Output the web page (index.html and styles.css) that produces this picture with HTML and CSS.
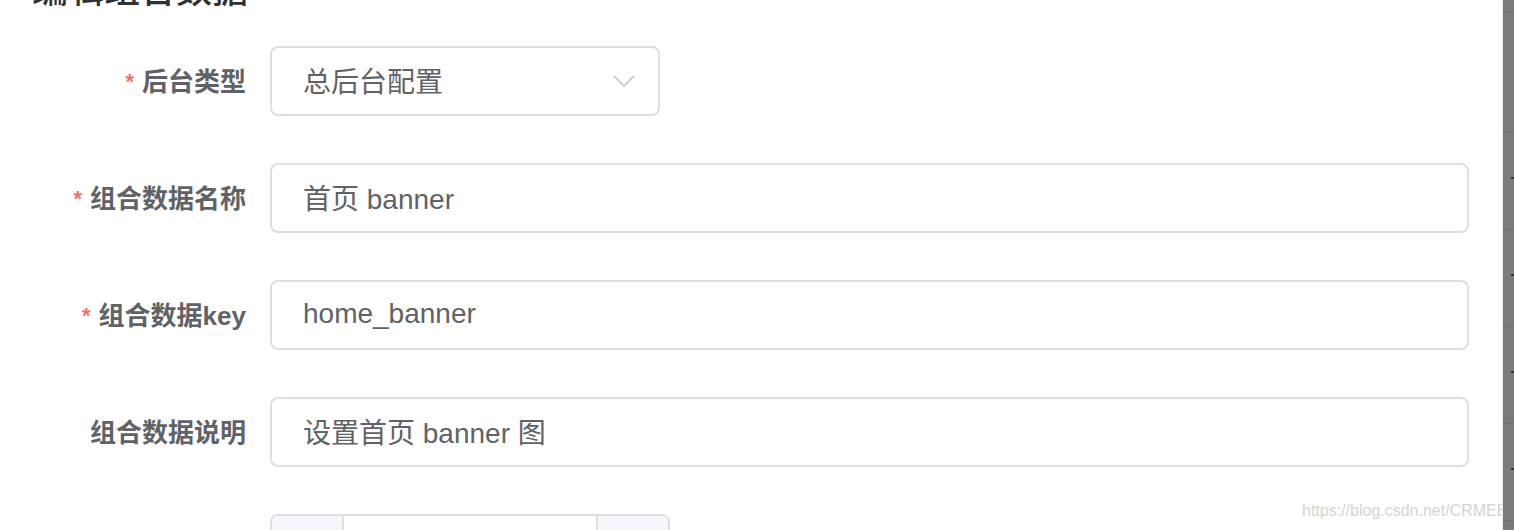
FILE: index.html
```html
<!DOCTYPE html>
<html>
  <head>
    <title>编辑组合数据</title>
    <link rel="stylesheet" href="styles.css">
  </head>
  <body>
    <div class="page">
      <div class="dialog">
        <h3 class="dialog-title">编辑组合数据</h3>
        <div class="form">
          <div class="form-item">
            <label class="form-label"><span class="req">*</span>后台类型</label>
            <div class="select">
              <span>总后台配置</span>
              <svg class="arrow" width="22" height="12" viewBox="0 0 22 12"><path d="M1 1 L11 11 L21 1" fill="none" stroke="#c0c4cc" stroke-width="1.6"/></svg>
            </div>
          </div>
          <div class="form-item">
            <label class="form-label"><span class="req">*</span>组合数据名称</label>
            <div class="input">首页 banner</div>
          </div>
          <div class="form-item">
            <label class="form-label"><span class="req">*</span>组合数据key</label>
            <div class="input">home_banner</div>
          </div>
          <div class="form-item">
            <label class="form-label">组合数据说明</label>
            <div class="input">设置首页 banner 图</div>
          </div>
          <div class="form-item">
            <label class="form-label"></label>
            <div class="number">
              <span class="num-btn"></span>
              <span class="num-value"></span>
              <span class="num-btn right"></span>
            </div>
          </div>
        </div>
        <div class="watermark">https://blog.csdn.net/CRMEB</div>
      </div>
      <div class="mask">
        <div class="mask-row first"></div>
        <div class="mask-row tall"></div>
        <div class="mask-row"></div>
        <div class="mask-row"></div>
        <div class="mask-row"></div>
        <div class="mask-row"></div>
        <div class="mask-row"></div>
      </div>
    </div>
  </body>
</html>
```

FILE: styles.css
```css
body{
  margin:0;
  background:#fff;
  font-family:"Liberation Sans","Noto Sans CJK SC",sans-serif;
  overflow:hidden;
}
.page{
  display:flex;
  height:530px;
  overflow:hidden;
}
.dialog{
  flex:1;
  position:relative;
  padding:0 33px 0 0;
  background:#fff;
}
.dialog-title{
  margin:-31px 0 0 32px;
  font-size:36px;
  line-height:36px;
  font-weight:500;
  color:#303133;
  font-family:"Noto Sans CJK SC",sans-serif;
}
.form{
  margin-top:41px;
}
.form-item{
  display:grid;
  grid-template-columns:270px 1fr;
  align-items:center;
  margin-bottom:47px;
}
.form-label{
  text-align:right;
  padding:0 24px 4px 0;
  font-size:26px;
  font-weight:bold;
  color:#606266;
  font-family:"Liberation Sans","Noto Sans CJK SC",sans-serif;
}
.req{
  color:#f56c6c;
  font-size:22px;
  margin-right:8px;
  position:relative;
  top:-2px;
}
.input,.select{
  box-sizing:border-box;
  height:70px;
  border:2px solid #dcdfe6;
  border-radius:8px;
  padding:0 31px 2px;
  display:flex;
  align-items:center;
  font-size:28px;
  color:#606266;
}
.select{
  width:390px;
  justify-content:space-between;
  padding-right:23px;
}
.arrow{
  margin-top:2px;
}
.number{
  box-sizing:border-box;
  width:400px;
  height:70px;
  border:2px solid #dcdfe6;
  border-radius:8px;
  display:grid;
  grid-template-columns:72px 1fr 72px;
  overflow:hidden;
}
.num-btn{
  background:#f5f7fa;
  border-right:2px solid #dcdfe6;
}
.num-btn.right{
  border-right:none;
  border-left:2px solid #dcdfe6;
}
.watermark{
  position:absolute;
  left:1302px;
  top:502px;
  font-size:16px;
  color:#d4d4d4;
  white-space:nowrap;
}
.mask{
  width:11px;
  background:#7b7b7b;
  border-left:1px solid #e8e8e8;
  position:relative;
  z-index:1;
  display:flex;
  flex-direction:column;
}
.mask-row{
  height:96px;
  border-bottom:1px solid #6e6e6e;
  position:relative;
  flex-shrink:0;
}
.mask-row.first{
  height:12px;
}
.mask-row.tall{
  height:119px;
}
.mask-row::after{
  content:"";
  position:absolute;
  right:0;
  top:44px;
  width:3px;
  height:2px;
  background:#333;
}
.mask-row.first::after,.mask-row.tall::after{
  display:none;
}
```
